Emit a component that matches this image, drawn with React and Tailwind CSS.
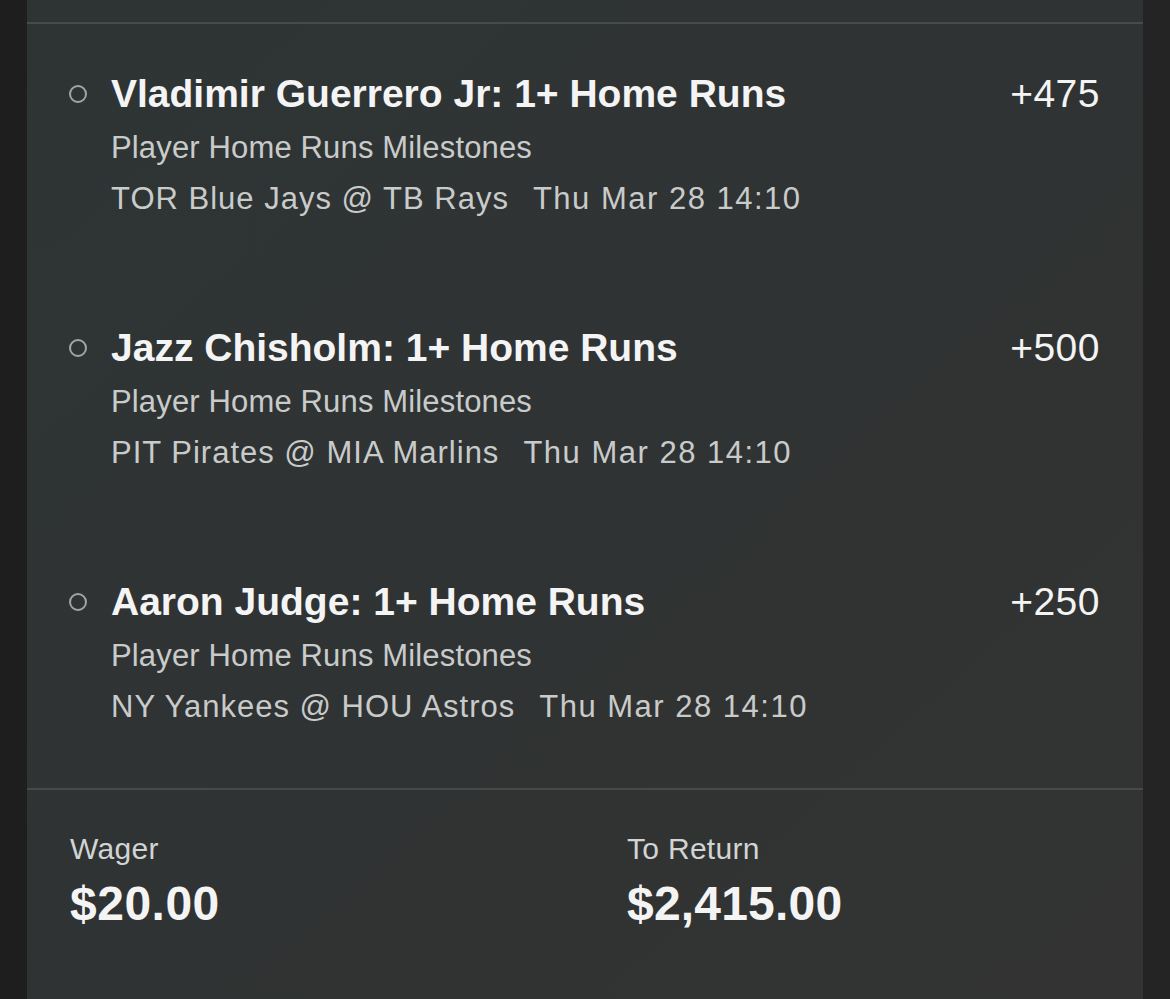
const legs = [
  {
    player: 'Vladimir Guerrero Jr',
    odds: '+475',
    game: 'TOR Blue Jays @ TB Rays',
  },
  {
    player: 'Jazz Chisholm',
    odds: '+500',
    game: 'PIT Pirates @ MIA Marlins',
  },
  {
    player: 'Aaron Judge',
    odds: '+250',
    game: 'NY Yankees @ HOU Astros',
  },
];

function Leg({ leg, last }) {
  return (
    <div className={`flex ${last ? 'pb-[61px]' : 'pb-[107px]'}`}>
      <div className="w-[84px] h-[44px] flex items-center pl-[42px]">
        <span className="block w-[18px] h-[18px] rounded-full border-2 border-[#a3a5a5]" />
      </div>
      <div className="flex-1">
        <p className="text-[39px] leading-[44px] font-bold text-[#f4f4f4]">
          {leg.player}: 1+ Home Runs
        </p>
        <p className="mt-[12px] text-[31px] leading-[40px] tracking-[0.15px] text-[#c9cbcb]">
          Player Home Runs Milestones
        </p>
        <p className="mt-[11px] text-[31px] leading-[40px] text-[#c9cbcb]">
          <span className="tracking-[1px]">{leg.game}</span>
          <span className="ml-[24px] tracking-[1.5px]">Thu Mar 28 14:10</span>
        </p>
      </div>
      <div className="pr-[43px] text-[39px] leading-[44px] tracking-[0.5px] text-[#f4f4f4]">{leg.odds}</div>
    </div>
  );
}

export default function App() {
  return (
    <div
      className="min-h-screen w-[1170px] h-[999px] overflow-hidden bg-gradient-to-r from-[#1e1e1e] to-[#242424]"
      style={{ fontFamily: '"Liberation Sans", Arial, sans-serif' }}
    >
      <div className="ml-[27px] w-[1116px] h-full bg-gradient-to-br from-[#2e3434] via-[#303333] to-[#333333]">
        <div className="h-[22px]" />
        <div className="h-[2px] bg-[#464b4b]" />

        {/* bet legs */}
        <div className="pt-[48px]">
          {legs.map((leg, i) => (
            <Leg key={leg.player} leg={leg} last={i === legs.length - 1} />
          ))}
        </div>

        <div className="h-[2px] bg-[#474a4a]" />

        {/* wager / payout */}
        <div className="flex pt-[41px] pl-[43px]">
          <div className="w-[557px]">
            <p className="text-[30px] leading-[36px] tracking-[0.3px] text-[#d2d4d4]">Wager</p>
            <p className="mt-[13px] text-[48px] leading-[48px] font-bold tracking-[0.5px] text-[#f4f4f4]">$20.00</p>
          </div>
          <div>
            <p className="text-[30px] leading-[36px] tracking-[0.3px] text-[#d2d4d4]">To Return</p>
            <p className="mt-[13px] text-[48px] leading-[48px] font-bold tracking-[0.2px] text-[#f4f4f4]">$2,415.00</p>
          </div>
        </div>
      </div>
    </div>
  );
}
